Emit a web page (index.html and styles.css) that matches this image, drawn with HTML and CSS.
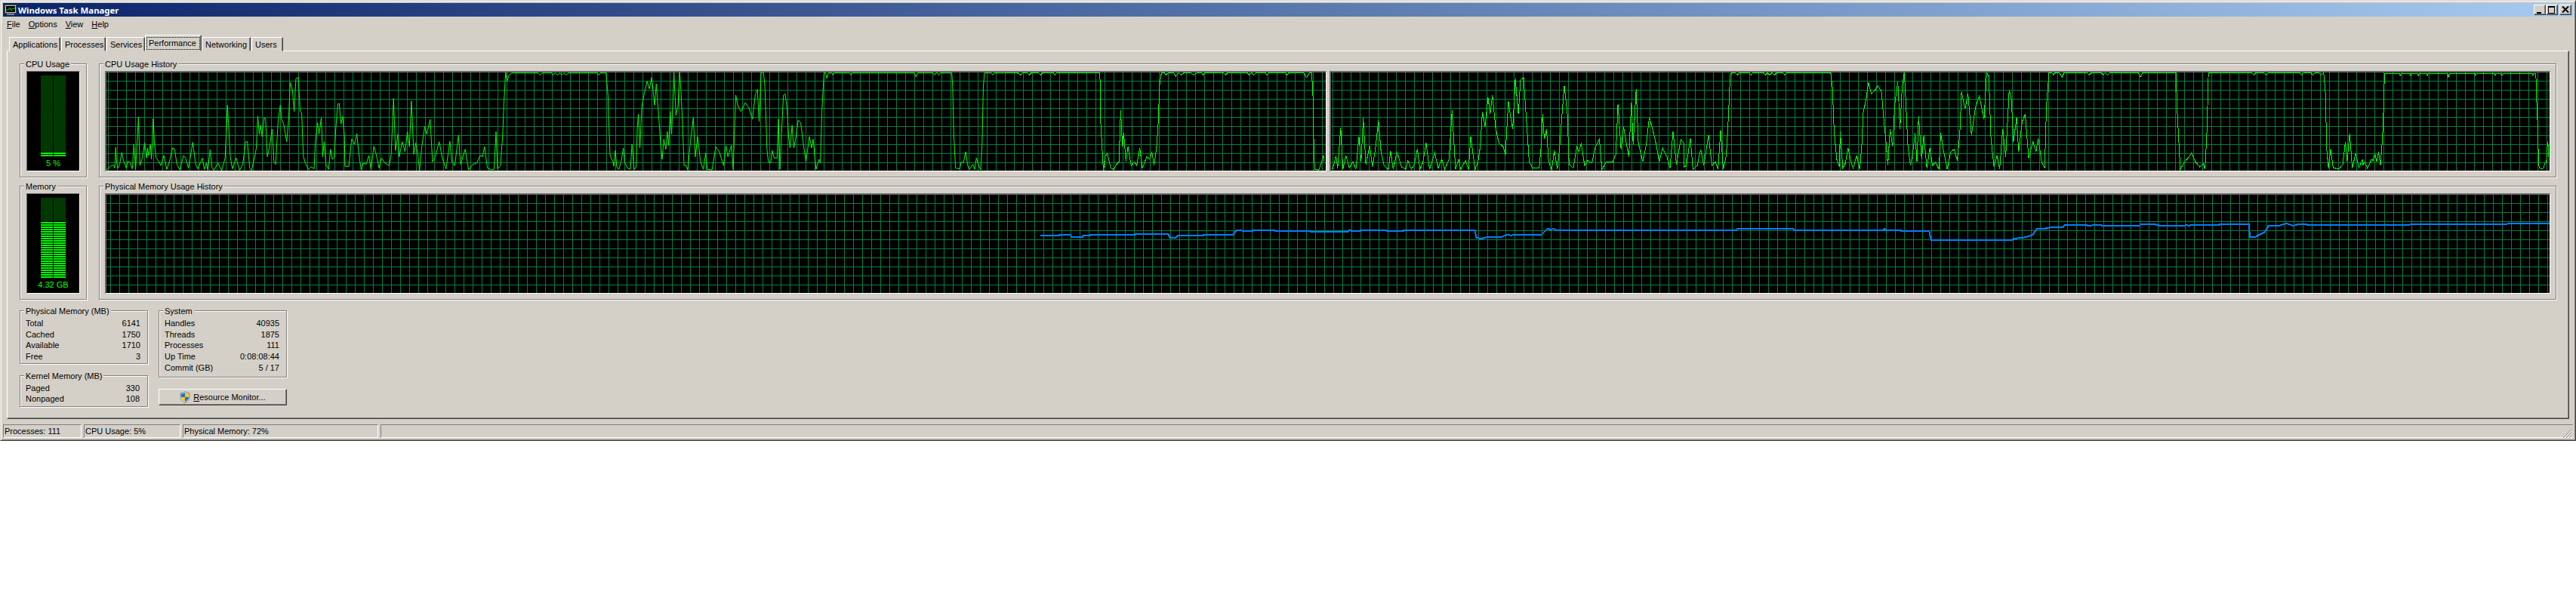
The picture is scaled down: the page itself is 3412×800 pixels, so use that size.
FILE: index.html
```html
<!DOCTYPE html>
<html lang="en">
<head>
    <meta charset="UTF-8">
    <title>Windows Task Manager</title>
    <link rel="stylesheet" href="styles.css">
</head>
<body>
<div class="window">
    <div class="titlebar">
        <svg class="app-icon" width="16" height="15" viewBox="0 0 16 15">
            <rect x="0.5" y="0.5" width="15" height="11" fill="#c8c8c8" stroke="#404040"/>
            <rect x="2" y="2" width="12" height="8" fill="#000"/>
            <polyline points="2,7 5,7 7,4 9,8 11,5 14,5" fill="none" stroke="#00e000"/>
            <rect x="3" y="12" width="10" height="2" fill="#808080"/>
        </svg>
        <span class="title-text">Windows Task Manager</span>
        <div class="title-buttons">
            <button class="cap-btn"><svg width="14" height="12" viewBox="0 0 14 12"><rect x="3" y="9" width="6" height="2"/></svg></button>
            <button class="cap-btn"><svg width="14" height="12" viewBox="0 0 14 12"><path d="M2 1h9v10H2zM3 3v7h7V3z" fill-rule="evenodd"/></svg></button>
            <button class="cap-btn cap-close"><svg width="14" height="12" viewBox="0 0 14 12"><path d="M3 1.5l8 8M11 1.5l-8 8" stroke="#000" stroke-width="2" fill="none"/></svg></button>
        </div>
    </div>

    <div class="menubar">
        <span><u>F</u>ile</span>
        <span><u>O</u>ptions</span>
        <span><u>V</u>iew</span>
        <span><u>H</u>elp</span>
    </div>

    <div class="tabs">
        <div class="tab tab-apps">Applications</div>
        <div class="tab tab-procs">Processes</div>
        <div class="tab tab-servs">Services</div>
        <div class="tab tab-active"><span class="focus">Performance</span></div>
        <div class="tab tab-nets">Networking</div>
        <div class="tab tab-users">Users</div>
    </div>

    <div class="panel">
        <div class="perf-row">
            <div class="group meter-group">
                <span class="legend">CPU Usage</span>
                <div class="meter">
                    <div class="leds">
                        <div class="led-col"><div class="led-on led-cpu"></div></div>
                        <div class="led-col"><div class="led-on led-cpu"></div></div>
                    </div>
                    <div class="meter-value">5 %</div>
                </div>
            </div>
            <div class="group history-group">
                <span class="legend">CPU Usage History</span>
                <div class="graphs">
                    <div class="graph">
                        <svg viewBox="140 95 1615 130">
                            <g transform="translate(130 80) scale(.3827 .3333)">
                                <polyline class="cpu-line" points="25,435 30,428 40,418 50,412 55,425 58,343 62,405 66,425 72,410 79,363 85,395 95,425 100,397 108,405 116,428 121,330 127,430 132,330 137,222 142,415 150,385 158,325 165,385 168,345 172,375 178,330 182,390 188,228 192,320 198,385 205,395 215,415 225,375 235,430 245,395 255,345 262,350 270,410 280,432 293,375 300,385 310,425 325,322 335,410 342,428 350,408 358,385 365,430 372,405 377,432 385,352 392,425 398,434 412,405 425,435 437,385 445,175 455,380 462,428 475,385 487,434 498,410 508,320 514,320 522,425 528,434 538,388 545,345 550,218 555,290 560,255 565,300 572,225 577,228 583,380 590,345 600,270 606,400 612,410 620,245 628,175 632,230 640,250 650,320 657,235 662,85 670,115 676,200 682,70 690,65 697,200 702,205 708,380 715,405 725,430 735,420 745,428 750,310 757,245 762,290 770,225 775,380 780,320 786,410 795,430 802,350 808,390 815,380 820,270 827,170 832,168 838,250 844,220 850,300 852,418 865,418 875,310 885,330 893,288 900,370 908,432 915,405 925,410 935,375 942,430 952,338 960,370 970,425 978,385 990,405 1005,415 1012,370 1020,148 1027,355 1035,290 1040,380 1050,320 1060,360 1068,280 1075,340 1082,158 1090,370 1097,325 1105,380 1110,435 1118,340 1128,260 1135,290 1147,232 1155,400 1165,380 1178,320 1190,390 1202,428 1215,318 1222,400 1232,415 1245,295 1252,410 1268,350 1280,432 1295,410 1308,405 1320,375 1328,380 1335,340 1345,425 1360,432 1368,430 1375,280 1380,428 1390,415 1398,295 1402,170 1408,45 1413,80 1420,55 1430,47 1520,47 1527,55 1535,47 1568,47"/>
                            </g>
                            <g transform="translate(730 80) scale(.3827 .3333)">
                                <polyline class="cpu-line" points="0,47 5,55 12,47 20,55 28,47 35,55 42,47 50,55 58,47 158,47 163,55 168,47 188,47 195,140 198,265 202,375 212,400 215,418 220,355 225,420 232,430 240,400 248,345 252,400 262,425 272,430 278,330 285,430 292,420 296,270 300,210 305,345 312,180 320,130 330,80 338,110 346,65 356,175 362,90 370,215 378,345 382,390 388,310 395,350 400,280 405,335 410,200 415,290 423,45 430,215 437,180 443,45 448,130 453,255 458,415 465,415 471,432 480,320 490,225 497,380 505,300 515,400 525,430 533,365 538,430 555,432 568,340 580,360 595,415 603,335 610,380 622,335 628,430 637,135 645,180 655,200 670,165 682,185 695,230 705,130 712,112 718,240 725,45 733,45 738,100 745,350 750,400 758,405 763,355 770,385 780,385 785,230 790,430 795,300 802,135 808,130 815,190 820,300 825,345 832,255 838,345 845,305 853,235 862,245 870,320 880,400 892,300 900,345 905,310 915,430 925,390 930,405 935,205 940,100 943,47 948,47 952,68 958,47 970,47 973,55 978,47 1032,47 1036,55 1040,47 1255,47 1261,63 1266,47 1320,47 1325,55 1330,47 1336,47 1340,55 1345,47 1385,47 1388,100 1392,295 1398,425 1412,428 1418,400 1425,405 1433,360 1440,415 1446,430 1458,410 1464,430 1470,385 1478,415 1485,432 1490,325 1494,105 1498,47 1522,47 1527,55 1532,47 1568,47"/>
                            </g>
                            <g transform="translate(1330 90) scale(.574 .3333)">
                                <polyline class="cpu-line" points="0,16 30,16 36,25 42,16 52,16 57,24 62,16 78,16 83,25 88,16 112,16 116,25 120,16 220,16 222,220 228,405 232,350 237,335 245,395 252,400 258,380 264,370 268,165 272,310 275,255 280,370 285,310 292,385 300,370 305,385 312,315 318,395 328,350 335,360 340,330 345,385 350,325 354,240 358,60 362,16 368,16 372,25 378,16 390,16 395,30 402,16 408,25 414,16 430,16 435,25 445,16 455,16 458,25 462,16 505,16 510,25 515,16 560,16 565,25 570,16 575,25 580,16 602,16 605,25 610,16 648,16 652,25 656,16 690,16 697,35 704,16 709,16 712,120 714,340 716,400 725,403 731,375 736,345 738,370"/>
                            </g>
                        </svg>
                    </div>
                    <div class="graph">
                        <svg viewBox="1762 95 1615 130">
                            <g transform="translate(1330 90) scale(.574 .3333)">
                                <polyline class="cpu-line" points="755,400 760,375 764,345 768,395 775,235 780,400 787,345 795,395 803,370 810,400 817,270 822,370 827,195 833,380 842,305 848,390 855,320 862,205 868,330 875,385 885,400 890,328 896,400 905,330 915,390 925,400 930,365 938,400 945,380 952,318 958,400 965,370 972,295 980,400 992,335 1000,395 1008,360 1015,400 1025,360 1032,165 1040,400 1047,360 1052,400 1063,365 1070,400 1075,270 1085,400 1092,370 1097,310 1102,170 1108,230 1115,115 1120,180 1125,105 1133,240 1140,295 1150,310 1155,345 1162,130 1167,190 1172,240 1178,40 1185,180 1190,45 1197,35 1205,240 1210,370 1218,395 1233,395 1238,300 1241,180 1245,280 1250,240 1255,370 1262,400 1268,325 1275,400 1280,320 1285,200 1291,68 1298,175 1302,380 1312,395 1320,310 1325,330 1330,295 1338,385 1345,365 1355,375 1362,315 1372,280 1378,400 1388,370 1403,370 1410,340 1415,140 1422,320 1428,230 1435,305 1440,350 1446,135 1450,300 1457,80 1462,295 1472,370 1480,305 1487,195 1495,240 1503,300 1510,370 1518,315 1528,350 1535,395 1542,250 1550,380 1560,280 1568,300"/>
                            </g>
                            <g transform="translate(2230 90) scale(.574 .3333)">
                                <polyline class="cpu-line" points="0,300 0,390 5,385 14,275 20,400 30,385 38,320 45,385 56,265 64,385 72,370 78,400 84,245 90,400 97,345 102,190 106,25 110,16 118,16 123,25 127,16 150,16 154,25 158,16 183,16 187,25 192,16 197,25 203,16 208,25 213,16 228,16 232,25 236,16 338,16 342,75 346,250 352,360 358,390 360,250 366,395 372,375 378,315 385,370 390,395 398,345 405,400 410,300 413,175 420,120 425,55 432,100 440,85 447,68 455,90 460,190 465,280 470,385 475,240 481,310 486,140 493,50 498,240 503,70 508,16 512,150 516,300 522,385 527,340 533,255 537,370 541,190 548,360 553,265 560,395 567,315 573,385 580,370 588,400 592,255 598,320 607,400 615,330 623,320 630,365 636,260 640,90 648,160 655,100 663,265 672,155 681,110 692,200 698,16 703,30 708,280 715,390 722,345 728,400 735,240 742,350 750,85 755,120 760,290 767,195 772,330 780,210 787,180 795,355 805,290 812,330 817,275 825,370 832,395 836,150 842,16 848,16 852,24 856,16 866,16 872,33 877,16 930,16 935,25 940,16 962,16 967,25 972,16 977,25 983,16 1048,16 1053,33 1058,16 1135,16 1138,170 1145,400 1155,370 1163,355 1171,335 1180,370 1190,390 1198,378 1202,400 1206,270 1210,16 1310,16 1315,25 1320,16 1338,16 1343,25 1348,16 1420,16 1425,25 1430,16 1447,16 1451,25 1456,16 1465,16 1470,25 1476,16 1480,95 1483,320 1487,395 1492,320 1498,395 1512,398 1520,380 1526,290 1530,370 1536,258 1542,395 1550,335 1557,395 1566,360"/>
                            </g>
                            <g transform="translate(3100 0) scale(.3333 .3333)">
                                <polyline class="cpu-line" points="87,630 87,655 95,640 105,665 115,645 122,630 128,635 135,605 142,640 150,600 157,655 163,580 167,510 170,425 172,335 175,288 232,288 236,297 240,288 274,288 278,297 282,288 304,288 308,297 312,288 340,288 344,297 348,288 422,288 427,303 432,288 532,288 536,297 540,288 610,288 614,297 618,288 634,288 640,297 646,288 760,288 764,297 768,288 775,288 778,390 782,485 785,605 788,665 800,667 805,665 812,645 817,645 820,585 823,560 826,620"/>
                            </g>
                        </svg>
                    </div>
                </div>
            </div>
        </div>

        <div class="perf-row">
            <div class="group meter-group">
                <span class="legend">Memory</span>
                <div class="meter">
                    <div class="leds leds-mem">
                        <div class="led-col"><div class="led-on led-mem"></div></div>
                        <div class="led-col"><div class="led-on led-mem"></div></div>
                    </div>
                    <div class="meter-value">4.32 GB</div>
                </div>
            </div>
            <div class="group history-group">
                <span class="legend">Physical Memory Usage History</span>
                <div class="graphs">
                    <div class="graph graph-mem">
                        <svg viewBox="140 257 3237 130">
                            <g transform="translate(1330 260) scale(.6378 .3333)">
                                <polyline class="mem-line" points="75,153 113,153 113,150 137,150 139,158 162,158 164,152 178,152 178,150 272,150 272,147 340,147 343,161 355,161 360,153 413,153 413,150 475,150 482,131 495,134 515,134 515,132 560,132 562,135 635,135 636,138 712,138 716,131 722,135 740,135 740,132 792,132 794,135 828,135 828,132 977,132 980,162 992,165 1000,160 1032,160 1042,150 1052,152 1060,150 1115,150 1128,125 1135,131 1140,125 1147,132 1520,132 1522,126 1568,126"/>
                            </g>
                            <g transform="translate(2330 260) scale(.69 .3333)">
                                <polyline class="mem-line" points="0,126 65,126 67,132 238,132 240,126 243,132 272,132 272,135 326,135 330,171 485,171 490,165 510,160 525,150 533,125 550,125 550,122 582,120 586,111 628,111 630,114 655,110 658,114 730,114 732,108 760,108 762,111 772,114 815,114 820,111 825,114 828,111 884,111 884,108 940,108 942,159 952,159 960,150 970,140 978,114 997,114 1012,105 1025,114 1035,108 1050,108 1052,111 1065,111 1248,111 1250,108 1435,108 1437,105 1518,105"/>
                            </g>
                        </svg>
                    </div>
                </div>
            </div>
        </div>

        <div class="stats">
            <div class="stats-col">
                <div class="group stat-group">
                    <span class="legend">Physical Memory (MB)</span>
                    <div class="stat"><span>Total</span><span>6141</span></div>
                    <div class="stat"><span>Cached</span><span>1750</span></div>
                    <div class="stat"><span>Available</span><span>1710</span></div>
                    <div class="stat"><span>Free</span><span>3</span></div>
                </div>
                <div class="group stat-group kernel">
                    <span class="legend">Kernel Memory (MB)</span>
                    <div class="stat"><span>Paged</span><span>330</span></div>
                    <div class="stat"><span>Nonpaged</span><span>108</span></div>
                </div>
            </div>
            <div class="stats-col">
                <div class="group stat-group system">
                    <span class="legend">System</span>
                    <div class="stat"><span>Handles</span><span>40935</span></div>
                    <div class="stat"><span>Threads</span><span>1875</span></div>
                    <div class="stat"><span>Processes</span><span>111</span></div>
                    <div class="stat"><span>Up Time</span><span>0:08:08:44</span></div>
                    <div class="stat"><span>Commit (GB)</span><span>5 / 17</span></div>
                </div>
                <button class="resmon">
                    <svg width="14" height="16" viewBox="0 0 14 16">
                        <path d="M7 .5C5 2 3 2.500 1 2.500V8c0 3.500 2.500 6 6 7.500 3.500-1.500 6-4 6-7.500V2.500C11 2.500 9 2 7 .5z" fill="#c8d0d8" stroke="#8090a0"/>
                        <path d="M7 2C5.500 3 4 3.500 2 3.600V8h5z" fill="#1a70e0"/>
                        <path d="M7 2C8.500 3 10 3.500 12 3.600V8H7z" fill="#ffcc00"/>
                        <path d="M2 8h5v6C4.500 13 2.200 10.700 2 8z" fill="#ffcc00"/>
                        <path d="M12 8H7v6c2.500-1 4.800-3.300 5-6z" fill="#1a70e0"/>
                    </svg>
                    <span><u>R</u>esource Monitor...</span>
                </button>
            </div>
        </div>
    </div>

    <div class="statusbar">
        <div class="status-cell cell-procs">Processes: 111</div>
        <div class="status-cell cell-cpu">CPU Usage: 5%</div>
        <div class="status-cell cell-mem">Physical Memory: 72%</div>
        <div class="status-cell cell-rest">
            <svg class="grip" width="13" height="13" viewBox="0 0 13 13">
                <path d="M12 1L1 12M12 5L5 12M12 9L9 12" stroke="#808080" fill="none"/>
                <path d="M12 2L2 12M12 6L6 12M12 10L10 12" stroke="#fff" fill="none"/>
            </svg>
        </div>
    </div>
</div>
</body>
</html>
```
FILE: styles.css
```css
* {
    box-sizing: border-box;
}
body {
    margin: 0;
    background: #fff;
    font: 11px/13px "Liberation Sans", Arial, sans-serif;
    color: #000;
}
u {
    text-decoration: underline;
}

.window {
    width: 3412px;
    height: 584px;
    padding: 3px;
    background: #d4d0c8;
    border: 1px solid;
    border-color: #d4d0c8 #404040 #404040 #d4d0c8;
    box-shadow: inset 1px 1px 0 #fff, inset -1px -1px 0 #808080;
}

/* title bar */
.titlebar {
    display: flex;
    align-items: center;
    height: 18px;
    padding: 0 2px;
    background: linear-gradient(90deg, #0a246a, #a6caf0);
}
.app-icon {
    flex: none;
}
.title-text {
    margin-left: 2px;
    color: #fff;
    font: bold 11.4px/13px "Noto Sans", sans-serif;
}
.title-buttons {
    display: flex;
    margin-left: auto;
}
.cap-btn {
    display: flex;
    align-items: center;
    justify-content: center;
    width: 16px;
    height: 14px;
    padding: 0;
    background: #d4d0c8;
    border: 1px solid;
    border-color: #fff #404040 #404040 #fff;
    box-shadow: inset -1px -1px 0 #808080;
}
.cap-close {
    margin-left: 2px;
}

/* menu */
.menubar {
    display: flex;
    gap: 11px;
    align-items: center;
    height: 20px;
    padding-left: 5px;
}

/* tabs */
.tabs {
    display: flex;
    align-items: flex-end;
    height: 25px;
    padding-left: 8px;
    position: relative;
}
.tab {
    height: 19px;
    padding: 3px 4px 0;
    margin-right: 1px;
    margin-bottom: -1px;
    background: #d4d0c8;
    border: 1px solid;
    border-color: #fff #404040 #d4d0c8 #fff;
    box-shadow: inset -1px 0 0 #808080;
    white-space: nowrap;
}
.tab-apps { width: 68px; }
.tab-procs { width: 59px; }
.tab-servs { width: 51px; margin-right: 0; }
.tab-nets { width: 65px; }
.tab-users { width: 42px; }
.tab-active {
    position: relative;
    z-index: 1;
    width: 75px;
    height: 22px;
    margin: 0 0 -1px;
    padding: 3px 2px 0;
}
.focus {
    display: block;
    height: 15px;
    padding: 1px 2px 0;
    outline: 1px dotted #000;
}

/* page */
.panel {
    height: 488px;
    margin: 0 5px;
    padding: 16px 16px 0;
    border: 1px solid;
    border-color: #fff #404040 #404040 #fff;
    box-shadow: inset -1px -1px 0 #808080;
}
.perf-row {
    display: flex;
    gap: 16px;
    height: 151px;
    margin-bottom: 11px;
}
.group {
    position: relative;
    border: 1px solid #808080;
    box-shadow: 1px 1px 0 #fff, inset 1px 1px 0 #fff;
}
.legend {
    position: absolute;
    top: -6px;
    left: 5px;
    padding: 0 2px;
    background: #d4d0c8;
    white-space: nowrap;
}
.meter-group {
    flex: none;
    width: 89px;
    padding: 9px 8px 7px;
}
.history-group {
    flex: 1;
    padding: 9px 7px 7px;
}

/* meters */
.meter {
    display: flex;
    flex-direction: column;
    align-items: center;
    height: 100%;
    padding-top: 5px;
    background: #000;
    border: 1px solid;
    border-color: #696969 #fff #fff #696969;
    color: #0f0;
}
.leds {
    display: flex;
    gap: 1px;
    height: 107px;
}
.leds-mem {
    height: 106px;
}
.led-col {
    display: flex;
    flex-direction: column;
    justify-content: flex-end;
    width: 16px;
    background: repeating-conic-gradient(#007000 0 25%, #000 0 50%) 0 0 / 2px 2px;
}
.led-on {
    background: repeating-linear-gradient(#000 0 1px, #0f0 1px 3px);
}
.led-cpu {
    height: 6px;
}
.led-mem {
    height: 75px;
}
.meter-value {
    margin-top: 3px;
    text-align: center;
}

/* history graphs */
.graphs {
    display: flex;
    gap: 4px;
    height: 100%;
}
.graph {
    flex: 1;
    background-color: #000;
    background-image:
        linear-gradient(90deg, #008040 1px, transparent 1px),
        linear-gradient(#008040 1px, transparent 1px);
    background-size: 12px 12px;
    background-position: 2px 11px;
    border: 1px solid;
    border-width: 2px 1px 1px 2px;
    border-color: #696969 #fff #fff #696969;
}
.graph-mem {
    background-position: 5px 11px;
}
.graph svg {
    display: block;
    width: 100%;
    height: 100%;
}
.cpu-line,
.mem-line {
    fill: none;
    vector-effect: non-scaling-stroke;
    shape-rendering: crispEdges;
}
.cpu-line {
    stroke: #0f0;
    stroke-width: 1;
}
.mem-line {
    stroke: #0080ff;
    stroke-width: 2;
}

/* numbers below */
.stats {
    display: flex;
    gap: 14px;
    margin-top: 14px;
}
.stats-col {
    display: flex;
    flex-direction: column;
    gap: 15px;
    width: 170px;
}
.stat-group {
    padding: 9px 9px 1px 7px;
}
.stat {
    display: flex;
    justify-content: space-between;
    height: 14.67px;
    line-height: 14px;
}
.kernel {
    padding: 9px 10px 2px 7px;
}
.system {
    padding-bottom: 5px;
}
.resmon {
    display: flex;
    align-items: center;
    justify-content: center;
    gap: 4px;
    height: 22px;
    padding: 0;
    background: #d4d0c8;
    border: 1px solid;
    border-color: #fff #404040 #404040 #fff;
    box-shadow: inset -1px -1px 0 #808080;
    font: inherit;
}

/* status bar */
.statusbar {
    display: flex;
    gap: 3px;
    height: 18px;
    margin-top: 7px;
}
.status-cell {
    padding: 2px 0 0 1px;
    border: 1px solid;
    border-color: #808080 #fff #fff #808080;
    white-space: nowrap;
}
.cell-procs { width: 104px; }
.cell-cpu { width: 128px; }
.cell-mem { width: 259px; }
.cell-rest {
    flex: 1;
    display: flex;
    justify-content: flex-end;
    border-right-color: #d4d0c8;
}
.grip {
    margin-top: 3px;
}
```
